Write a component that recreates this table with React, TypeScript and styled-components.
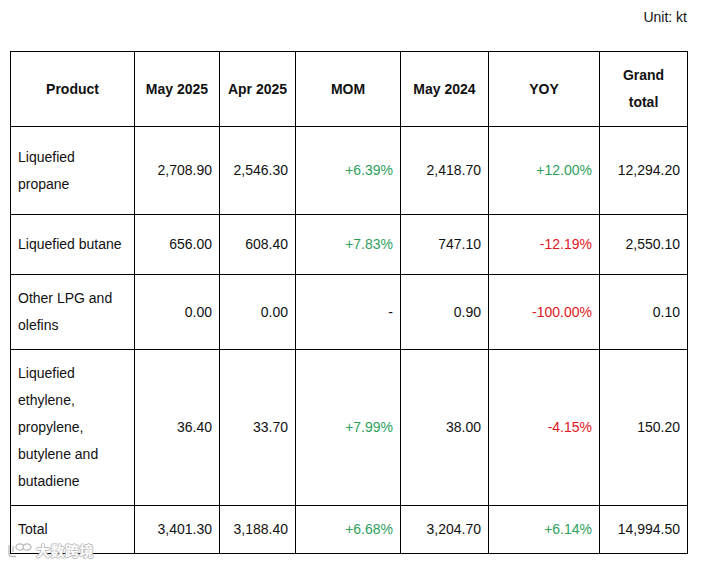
import React from "react";
import styled, { createGlobalStyle } from "styled-components";

const GlobalStyle = createGlobalStyle`
  html, body {
    margin: 0;
    padding: 0;
    background: #fff;
  }
  body {
    font-family: "Liberation Sans", Arial, sans-serif;
    color: #111;
  }
`;

const Page = styled.div`
  position: relative;
  width: 701px;
  height: 564px;
  padding: 7px 14px 0 10px;
  box-sizing: border-box;
`;

const Unit = styled.div`
  font-size: 14px;
  line-height: 20px;
  text-align: right;
  width: 677px;
  margin-bottom: 24px;
`;

const Table = styled.table`
  border-collapse: collapse;
  table-layout: fixed;
  width: 677px;
  font-size: 14px;
  line-height: 27px;
`;

const Row = styled.tr<{ $h: number }>`
  height: ${(p) => p.$h}px;
`;

const Th = styled.th`
  border: 1px solid #000;
  font-weight: bold;
  text-align: center;
  padding: 0 7px;
  vertical-align: middle;
`;

const Td = styled.td<{ $tone?: "up" | "down"; $left?: boolean }>`
  border: 1px solid #000;
  padding: 0 7px 0 7px;
  vertical-align: middle;
  text-align: ${(p) => (p.$left ? "left" : "right")};
  color: ${(p) =>
    p.$tone === "up" ? "#2ea05c" : p.$tone === "down" ? "#e0161d" : "#111"};
`;

const Watermark = styled.div`
  position: absolute;
  left: 7px;
  top: 541px;
  display: flex;
  align-items: center;
  gap: 3px;
  font-family: "Noto Sans CJK SC", sans-serif;
  font-size: 14px;
  font-weight: bold;
  line-height: 18px;
  color: #fff;
  letter-spacing: 0.5px;
  text-shadow: 1px 0 0 #bbb, -1px 0 0 #bbb, 0 1px 0 #bbb, 0 -1px 0 #bbb;
`;

const widths = [124, 85, 76, 105, 88, 111, 88];

type Item = {
  name: string;
  may25: string;
  apr25: string;
  mom: string;
  may24: string;
  yoy: string;
  total: string;
  h: number;
};

const rows: Item[] = [
  { name: "Liquefied propane", may25: "2,708.90", apr25: "2,546.30", mom: "+6.39%", may24: "2,418.70", yoy: "+12.00%", total: "12,294.20", h: 88 },
  { name: "Liquefied butane", may25: "656.00", apr25: "608.40", mom: "+7.83%", may24: "747.10", yoy: "-12.19%", total: "2,550.10", h: 60 },
  { name: "Other LPG and olefins", may25: "0.00", apr25: "0.00", mom: "-", may24: "0.90", yoy: "-100.00%", total: "0.10", h: 75 },
  { name: "Liquefied ethylene, propylene, butylene and butadiene", may25: "36.40", apr25: "33.70", mom: "+7.99%", may24: "38.00", yoy: "-4.15%", total: "150.20", h: 156 },
  { name: "Total", may25: "3,401.30", apr25: "3,188.40", mom: "+6.68%", may24: "3,204.70", yoy: "+6.14%", total: "14,994.50", h: 48 },
];

const tone = (v: string) =>
  v.startsWith("+") ? "up" : v.startsWith("-") && v.length > 1 ? "down" : undefined;

const Logo = () => (
  <svg width="26" height="16" viewBox="0 0 26 16" fill="#fff" stroke="#bbb" strokeWidth="1.3">
    <path d="M2 3 L2 12 Q2 14.5 5 14.5 L9 14.5" fill="none" />
    <path d="M6 4 L6 10" fill="none" />
    <ellipse cx="13" cy="5" rx="4" ry="3.2" />
    <ellipse cx="20" cy="5" rx="4" ry="3.2" />
  </svg>
);

export default function App() {
  return (
    <Page>
      <GlobalStyle />
      <Unit>Unit: kt</Unit>
      <Table>
        <colgroup>
          {widths.map((w, i) => (
            <col key={i} style={{ width: w }} />
          ))}
        </colgroup>
        <thead>
          <Row $h={75}>
            <Th>Product</Th>
            <Th>May 2025</Th>
            <Th>Apr 2025</Th>
            <Th>MOM</Th>
            <Th>May 2024</Th>
            <Th>YOY</Th>
            <Th>Grand total</Th>
          </Row>
        </thead>
        <tbody>
          {rows.map((r) => (
            <Row key={r.name} $h={r.h}>
              <Td $left>{r.name}</Td>
              <Td>{r.may25}</Td>
              <Td>{r.apr25}</Td>
              <Td $tone={tone(r.mom)}>{r.mom}</Td>
              <Td>{r.may24}</Td>
              <Td $tone={tone(r.yoy)}>{r.yoy}</Td>
              <Td>{r.total}</Td>
            </Row>
          ))}
        </tbody>
      </Table>
      <Watermark>
        <Logo />
        大数跨境
      </Watermark>
    </Page>
  );
}
